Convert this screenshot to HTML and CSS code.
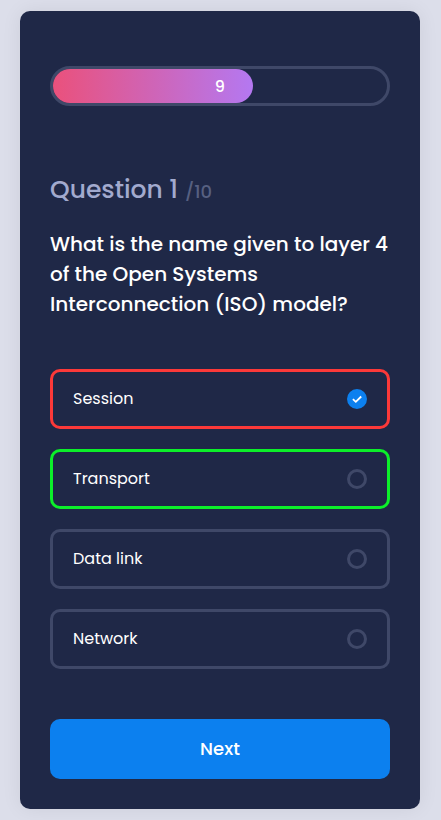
FILE: index.html
```html
<!DOCTYPE html>
<html lang="en">
<head>
<meta charset="utf-8">
<title>Quiz</title>
<link rel="stylesheet" href="styles.css">
</head>
<body>
<main class="quiz">
  <div class="progress"><div class="progress-bar"><span class="progress-text">9</span></div></div>
  <h1 class="heading"><span class="current">Question 1</span><span class="total">/10</span></h1>
  <p class="question">What is the name given to layer 4 of the Open Systems Interconnection (ISO) model?</p>
  <div class="answers">
    <div class="answer wrong"><span class="text">Session</span><span class="checkbox checked"><svg class="check" viewBox="0 0 10 10"><path d="M.9 5.1 3.8 7.8 9.2 2.5"/></svg></span></div>
    <div class="answer correct"><span class="text">Transport</span><span class="checkbox"></span></div>
    <div class="answer"><span class="text">Data link</span><span class="checkbox"></span></div>
    <div class="answer"><span class="text">Network</span><span class="checkbox"></span></div>
  </div>
  <button class="next" type="button">Next</button>
</main>
</body>
</html>
```
FILE: styles.css
```css
* { box-sizing: border-box; margin: 0; padding: 0; }
body {
  height: 820px;
  padding: 11px 21px 11px 20px;
  overflow: hidden;
  background: #dcdeea;
  font-family: Poppins, Inter, sans-serif;
  color: #fff;
}
.quiz {
  height: 798px;
  padding: 55px 30px 30px;
  display: flex;
  flex-direction: column;
  border-radius: 10px;
  background: #1f2847;
  box-shadow: 0 0 20px rgba(0, 0, 0, .07);
}
.progress {
  height: 40px;
  border: 3px solid #3f4868;
  border-radius: 20px;
}
.progress-bar {
  width: 200px;
  height: 34px;
  padding-right: 28px;
  display: flex;
  align-items: center;
  justify-content: flex-end;
  border-radius: 17px;
  background: linear-gradient(to right, #ea517c, #b478f1);
}
.progress-text { font-size: 16px; font-weight: 500; }
.heading {
  margin-top: 63px;
  height: 36px;
  line-height: 36px;
  font-weight: 500;
  white-space: nowrap;
}
.current { font-size: 25px; color: #a2aace; }
.total { margin-left: 7px; font-size: 18px; font-weight: 500; color: #576081; }
.question {
  margin-top: 24px;
  height: 90px;
  font-size: 20px;
  line-height: 30px;
  font-weight: 500;
}
.answers {
  margin-top: 50px;
  display: flex;
  flex-direction: column;
  gap: 20px;
}
.answer {
  height: 60px;
  padding: 0 20px;
  display: flex;
  align-items: center;
  justify-content: space-between;
  border: 3px solid #3f4868;
  border-radius: 10px;
}
.wrong { border-color: #fc3939; }
.correct { border-color: #0cef2a; }
.text { font-size: 16px; line-height: 24px; }
.checkbox {
  width: 20px;
  height: 20px;
  display: flex;
  align-items: center;
  justify-content: center;
  border: 3px solid #3f4868;
  border-radius: 50%;
}
.checked { border-color: #0c80ef; background: #0c80ef; }
.check {
  flex: none;
  width: 10px;
  height: 10px;
  fill: none;
  stroke: #fff;
  stroke-width: 1.8;
}
.next {
  margin-top: 50px;
  height: 60px;
  padding-bottom: 2px;
  border: 0;
  border-radius: 10px;
  background: #0c80ef;
  color: #fff;
  font: 500 18px Poppins, Inter, sans-serif;
}
```
